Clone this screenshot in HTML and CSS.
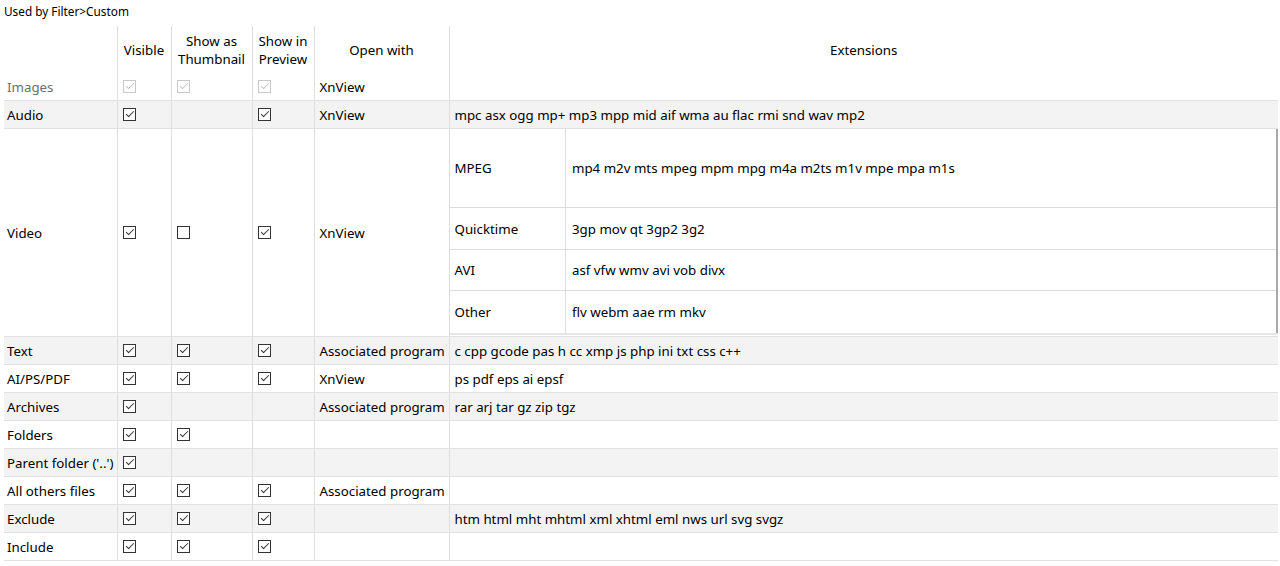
FILE: index.html
```html
<!DOCTYPE html>
<html>
<head>
<meta charset="utf-8">
<link rel="stylesheet" href="styles.css">
</head>
<body>
<div class="title">Used by Filter&gt;Custom</div>
<table class="grid">
  <colgroup>
    <col class="c0"><col class="c1"><col class="c2"><col class="c3"><col class="c4"><col class="c5">
  </colgroup>
  <thead>
    <tr class="head">
      <th class="first"></th>
      <th>Visible</th>
      <th>Show as<br>Thumbnail</th>
      <th>Show in<br>Preview</th>
      <th>Open with</th>
      <th>Extensions</th>
    </tr>
  </thead>
  <tbody>
    <tr class="r-img">
      <td class="first dim">Images</td>
      <td><span class="cb on dis"></span></td>
      <td><span class="cb on dis"></span></td>
      <td><span class="cb on dis"></span></td>
      <td>XnView</td>
      <td></td>
    </tr>
    <tr class="alt">
      <td class="first">Audio</td>
      <td><span class="cb on"></span></td>
      <td></td>
      <td><span class="cb on"></span></td>
      <td>XnView</td>
      <td>mpc asx ogg mp+ mp3 mpp mid aif wma au flac rmi snd wav mp2</td>
    </tr>
    <tr class="video">
      <td class="first">Video</td>
      <td><span class="cb on"></span></td>
      <td><span class="cb"></span></td>
      <td><span class="cb on"></span></td>
      <td>XnView</td>
      <td class="nestcell">
        <table class="nest">
          <colgroup><col class="n0"><col class="n1"></colgroup>
          <tr class="n-mpeg"><td>MPEG</td><td>mp4 m2v mts mpeg mpm mpg m4a m2ts m1v mpe mpa m1s</td></tr>
          <tr class="n-qt"><td>Quicktime</td><td>3gp mov qt 3gp2 3g2</td></tr>
          <tr class="n-row n-thick"><td>AVI</td><td>asf vfw wmv avi vob divx</td></tr>
          <tr class="n-row n-last"><td>Other</td><td>flv webm aae rm mkv</td></tr>
        </table>
      </td>
    </tr>
    <tr class="alt">
      <td class="first">Text</td>
      <td><span class="cb on"></span></td>
      <td><span class="cb on"></span></td>
      <td><span class="cb on"></span></td>
      <td>Associated program</td>
      <td>c cpp gcode pas h cc xmp js php ini txt css c++</td>
    </tr>
    <tr>
      <td class="first">AI/PS/PDF</td>
      <td><span class="cb on"></span></td>
      <td><span class="cb on"></span></td>
      <td><span class="cb on"></span></td>
      <td>XnView</td>
      <td>ps pdf eps ai epsf</td>
    </tr>
    <tr class="alt">
      <td class="first">Archives</td>
      <td><span class="cb on"></span></td>
      <td></td>
      <td></td>
      <td>Associated program</td>
      <td>rar arj tar gz zip tgz</td>
    </tr>
    <tr>
      <td class="first">Folders</td>
      <td><span class="cb on"></span></td>
      <td><span class="cb on"></span></td>
      <td></td>
      <td></td>
      <td></td>
    </tr>
    <tr class="alt">
      <td class="first">Parent folder ('..')</td>
      <td><span class="cb on"></span></td>
      <td></td>
      <td></td>
      <td></td>
      <td></td>
    </tr>
    <tr>
      <td class="first">All others files</td>
      <td><span class="cb on"></span></td>
      <td><span class="cb on"></span></td>
      <td><span class="cb on"></span></td>
      <td>Associated program</td>
      <td></td>
    </tr>
    <tr class="alt">
      <td class="first">Exclude</td>
      <td><span class="cb on"></span></td>
      <td><span class="cb on"></span></td>
      <td><span class="cb on"></span></td>
      <td></td>
      <td>htm html mht mhtml xml xhtml eml nws url svg svgz</td>
    </tr>
    <tr>
      <td class="first">Include</td>
      <td><span class="cb on"></span></td>
      <td><span class="cb on"></span></td>
      <td><span class="cb on"></span></td>
      <td></td>
      <td></td>
    </tr>
  </tbody>
</table>
</body>
</html>
```
FILE: styles.css
```css
html, body {
  margin: 0;
  padding: 0;
  background: #ffffff;
}
body {
  font-family: "Noto Sans", "Open Sans", sans-serif;
  font-size: 13.3px;
  color: #000;
}
.title {
  font-size: 11.8px;
  line-height: 14px;
  padding: 4px 0 0 4px;
  height: 26px;
  box-sizing: border-box;
}
.grid {
  margin-left: 4px;
  width: 1274px;
  border-collapse: collapse;
  table-layout: fixed;
}
.c0 { width: 113px; }
.c1 { width: 54px; }
.c2 { width: 81px; }
.c3 { width: 62px; }
.c4 { width: 135px; }
.c5 { width: auto; }

.grid > thead > tr > th,
.grid > tbody > tr > td {
  border-left: 1px solid #dedede;
  border-bottom: 1px solid #e2e2e2;
  padding: 0 0 0 5px;
  height: 27px;
  vertical-align: middle;
  white-space: nowrap;
  overflow: hidden;
  text-align: left;
  font-weight: normal;
}
.grid > thead > tr > th {
  height: 47px;
  text-align: center;
  padding: 0;
  line-height: 18px;
  border-bottom: none;
}
.grid > tbody > tr.r-img > td { height: 27px; }
.grid > thead > tr > th.first,
.grid > tbody > tr > td.first {
  border-left: none;
  padding-left: 3px;
}
.grid > tbody > tr.alt > td { background: #f3f3f3; }
.dim { color: #6e6e6e; }

.cb {
  display: inline-block;
  width: 13px;
  height: 13px;
  box-sizing: border-box;
  border: 1px solid #333;
  background: #fff;
  vertical-align: middle;
  position: relative;
  top: -1px;
}
.cb.on::after {
  content: "";
  position: absolute;
  left: 2px;
  top: 2px;
  width: 7px;
  height: 3px;
  border-left: 1px solid #333;
  border-bottom: 1px solid #333;
  transform: rotate(-45deg);
}
.cb.dis { border-color: #c8c8c8; }
.cb.dis::after { border-color: #c8c8c8; }

.grid > tbody > tr.video > td { height: 207px; }
.grid > tbody > tr.video > td.nestcell {
  padding: 0;
  vertical-align: top;
}
.nest {
  width: 100%;
  border-collapse: collapse;
  table-layout: fixed;
  border-right: 2px solid #a9a9a9;
  border-bottom: 2px solid #a9a9a9;
}
.n0 { width: 116px; }
.nest td {
  padding: 0 0 0 5px;
  border-bottom: 1px solid #dcdcdc;
  white-space: nowrap;
  overflow: hidden;
  vertical-align: middle;
}
.nest td:first-child { border-right: 1px solid #dedede; }
.nest td + td { padding-left: 6px; }
.n-mpeg td { height: 78px; }
.n-qt td { height: 41px; }
.n-row td { height: 40px; }
.n-thick td { border-top: 1px solid #e8e8e8; }
.n-last td { height: 42px; border-bottom: 2px solid #e6e6e6; }
```
